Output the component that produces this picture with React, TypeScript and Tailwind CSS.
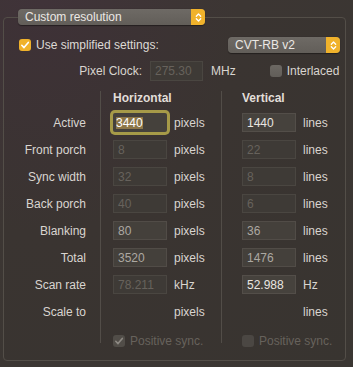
import React from "react";

const Stepper = () => (
  <svg width="7" height="11" viewBox="0 0 7 11" fill="none">
    <path d="M1.3 4.2 L3.5 2 L5.7 4.2" stroke="white" strokeWidth="1.3" strokeLinecap="round" strokeLinejoin="round" />
    <path d="M1.3 6.8 L3.5 9 L5.7 6.8" stroke="white" strokeWidth="1.3" strokeLinecap="round" strokeLinejoin="round" />
  </svg>
);

const Check = ({ color }: { color: string }) => (
  <svg width="12" height="12" viewBox="0 0 12 12" fill="none">
    <path d="M2.8 6.3 L5 8.6 L9.3 3.4" stroke={color} strokeWidth="1.6" strokeLinecap="round" strokeLinejoin="round" />
  </svg>
);

const Popup = ({ label, width }: { label: string; width: string }) => (
  <div className={`flex h-[16px] ${width} rounded-[4px] bg-gradient-to-b from-[#6e6a65] to-[#625e59] shadow-[0_0.5px_1px_rgba(0,0,0,0.4)]`}>
    <div className="flex flex-1 items-center pl-[7px] text-[12px] leading-[14px] text-[#ebe8e4]">{label}</div>
    <div className="flex w-[14px] items-center justify-center rounded-r-[4px] bg-[#f0b22b]">
      <Stepper />
    </div>
  </div>
);

type Field = { v: string; kind: "dis" | "ro" | "on" | "focus" };

const FieldBox = ({ f }: { f: Field }) => {
  if (f.kind === "focus") {
    return (
      <div className="flex h-[19px] w-[54px] items-center rounded-[2px] bg-[#45413c] pl-[3px] ring-3 ring-[#a69a48]">
        <span className="bg-[#8c7648] text-[12px] leading-[12px] text-white">{f.v}</span>
      </div>
    );
  }
  const cls =
    f.kind === "dis"
      ? "bg-[#3e3a36] border-[#4a4641] text-[#67625c]"
      : f.kind === "ro"
      ? "bg-[#44403b] border-[#514c47] text-[#aca8a2]"
      : "bg-[#46423d] border-[#534e49] text-[#e9e6e1]";
  return (
    <div className={`flex h-[19px] w-[54px] items-center border pl-[4px] text-[12px] leading-[14px] ${cls}`}>{f.v}</div>
  );
};

const labels = ["Active", "Front porch", "Sync width", "Back porch", "Blanking", "Total", "Scan rate", "Scale to"];

const hor: (Field | null)[] = [
  { v: "3440", kind: "focus" },
  { v: "8", kind: "dis" },
  { v: "32", kind: "dis" },
  { v: "40", kind: "dis" },
  { v: "80", kind: "ro" },
  { v: "3520", kind: "ro" },
  { v: "78.211", kind: "dis" },
  null,
];
const horU = ["pixels", "pixels", "pixels", "pixels", "pixels", "pixels", "kHz", "pixels"];

const ver: (Field | null)[] = [
  { v: "1440", kind: "on" },
  { v: "22", kind: "dis" },
  { v: "8", kind: "dis" },
  { v: "6", kind: "dis" },
  { v: "36", kind: "ro" },
  { v: "1476", kind: "ro" },
  { v: "52.988", kind: "on" },
  null,
];
const verU = ["lines", "lines", "lines", "lines", "lines", "lines", "Hz", "lines"];

const rowCls = (i: number) => `flex h-[19px] items-center ${i > 0 ? "mt-[8px]" : ""}`;

export default function App() {
  return (
    <div
      className="h-[367px] w-[353px] overflow-hidden bg-[#3b3632] bg-[radial-gradient(ellipse_at_12%_0%,#403339_0%,#3c3633_45%,#3a3632_100%)] text-[12px] leading-[14px] text-[#d9d5d0]"
      style={{ fontFamily: '"Liberation Sans", Arial, sans-serif' }}
    >
      <div className="relative z-10 ml-[18px] mt-[9px] h-[16px] w-[187px]">
        <Popup label="Custom resolution" width="w-[187px]" />
      </div>
      <div className="mx-[3px] mr-[7px] -mt-[8px] h-[344px] rounded-[4px] border border-[#534e48] bg-black/[0.03]">
        {/* simplified settings row */}
        <div className="mt-[19px] flex h-[16px] items-center pl-[15px] pr-[5px]">
          <div className="flex h-[12px] w-[12px] items-center justify-center rounded-[3px] bg-[#f0b22b]">
            <Check color="white" />
          </div>
          <span className="ml-[5px] text-[#dedad5]">Use simplified settings:</span>
          <div className="ml-auto">
            <Popup label="CVT-RB v2" width="w-[112px]" />
          </div>
        </div>
        {/* pixel clock row */}
        <div className="mt-[8px] flex h-[20px] items-center">
          <div className="w-[138px] text-right">Pixel Clock:</div>
          <div className="ml-[8px] flex h-[20px] w-[53px] items-center border border-[#4a4641] bg-[#3e3a36] pl-[4px] text-[#67625c]">275.30</div>
          <span className="ml-[8px]">MHz</span>
          <div className="ml-[34px] h-[12px] w-[12px] rounded-[3px] bg-gradient-to-b from-[#6c6863] to-[#625e59]" />
          <span className="ml-[5px]">Interlaced</span>
        </div>
        {/* grid */}
        <div className="mt-[10px] flex">
          <div className="w-[96px] pr-[14px] text-right">
            <div className="h-[22px]" />
            {labels.map((l, i) => (
              <div key={l} className={`${rowCls(i)} justify-end`}>{l}</div>
            ))}
          </div>
          <div className="w-[121px] border-l border-[#524d48] pl-[12px]">
            <div className="h-[22px] font-bold text-[#e2ded9]">Horizontal</div>
            {hor.map((f, i) => (
              <div key={i} className={`${rowCls(i)} gap-[7px]`}>
                {f ? <FieldBox f={f} /> : <div className="w-[54px]" />}
                <span>{horU[i]}</span>
              </div>
            ))}
            <div className="mt-[8px] h-[14px] pt-[5px]">
              <div className="flex items-center">
                <div className="flex h-[12px] w-[12px] items-center justify-center rounded-[3px] bg-[#514d48]">
                  <Check color="#8e8a84" />
                </div>
                <span className="ml-[5px] text-[#67625c]">Positive sync.</span>
              </div>
            </div>
          </div>
          <div className="flex-1 border-l border-[#524d48] pl-[20px]">
            <div className="h-[22px] font-bold text-[#e2ded9]">Vertical</div>
            {ver.map((f, i) => (
              <div key={i} className={`${rowCls(i)} gap-[7px]`}>
                {f ? <FieldBox f={f} /> : <div className="w-[54px]" />}
                <span>{verU[i]}</span>
              </div>
            ))}
            <div className="mt-[8px] h-[14px] pt-[5px]">
              <div className="flex items-center">
                <div className="h-[12px] w-[12px] rounded-[3px] bg-[#4b4743]" />
                <span className="ml-[5px] text-[#67625c]">Positive sync.</span>
              </div>
            </div>
          </div>
        </div>
      </div>
    </div>
  );
}
